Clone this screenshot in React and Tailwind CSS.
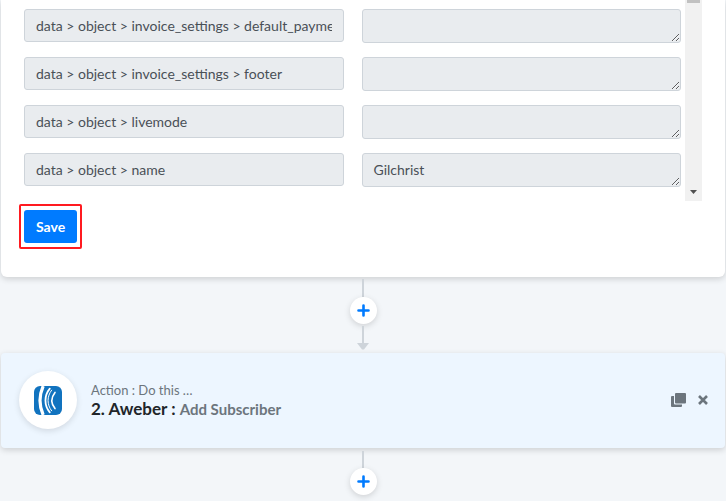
import React from 'react';

const fields = [
    { id: 'default_payment', label: 'data > object > invoice_settings > default_payment_method', value: '' },
    { id: 'footer', label: 'data > object > invoice_settings > footer', value: '' },
    { id: 'livemode', label: 'data > object > livemode', value: '' },
    { id: 'name', label: 'data > object > name', value: 'Gilchrist' },
];

function AddStep() {
    return (
        <button type="button" aria-label="Add step" className="w-[27px] h-[27px] rounded-full bg-white shadow-[0_2px_6px_rgba(0,0,0,0.15)] flex items-center justify-center text-[#007bff]">
            <svg viewBox="0 0 13 13" className="w-[13px] h-[13px]" fill="none" stroke="currentColor" strokeWidth="2.6" strokeLinecap="round">
                <path d="M6.5 1.5v10M1.5 6.5h10" />
            </svg>
        </button>
    );
}

function AweberLogo() {
    return (
        <svg viewBox="0 0 28 29" className="w-7 h-[29px]" fill="none">
            <rect width="28" height="29" rx="6" fill="#1173bf" />
            <g stroke="#fff" strokeLinecap="round">
                <path d="M9.2 0C5.2 9 5.2 20 9.2 29" strokeWidth="3.2" strokeLinecap="butt" />
                <path d="M15.8 2.6C10 9.5 10 19.5 15.8 26.4" strokeWidth="1.8" />
                <path d="M17.6 4.2C12.8 10.5 12.8 18.5 17.6 24.8" strokeWidth="1" />
                <path d="M21 6.4C17 11.5 17 17.5 21 22.6" strokeWidth="1.6" />
            </g>
        </svg>
    );
}

export default function App() {
    return (
        <div className="min-h-screen bg-[#f3f6f9] px-px font-['Lato',sans-serif] text-[#212529]">
            {/* RESPONSE DATA */}
            <section className="bg-white rounded-b-md shadow-[0_2px_6px_rgba(0,0,0,0.16)] px-[23px] pb-7">
                <div className="flex gap-1">
                    <div className="flex-1 min-w-0 pt-[9px] pb-[14px] flex flex-col gap-[14px]">
                        {fields.map(field => (
                            <div key={field.id} className="grid grid-cols-2 gap-[18px] items-start">
                                <input
                                    type="text"
                                    readOnly
                                    aria-label={`${field.id} key`}
                                    value={field.label}
                                    className="min-w-0 h-[33px] px-[11px] rounded-[3px] border border-[#ced4da] bg-[#e9ecef] text-[14px] text-[#495057]"
                                />
                                <textarea
                                    readOnly
                                    rows={1}
                                    aria-label={`${field.id} value`}
                                    defaultValue={field.value}
                                    className="block min-w-0 h-[34px] px-[11px] py-1.5 rounded-[3px] border border-[#ced4da] bg-[#e9ecef] text-[14px] leading-5 text-[#495057] resize-y overflow-hidden"
                                />
                            </div>
                        ))}
                    </div>
                    <div aria-hidden="true" className="w-[17px] bg-[#f1f1f1] flex flex-col items-center justify-between pb-[7px]">
                        <div className="w-[13px] h-[3px] bg-[#c1c1c1]" />
                        <svg viewBox="0 0 7 4" className="w-[7px] h-1" fill="#505050">
                            <path d="M0 0h7L3.5 4z" />
                        </svg>
                    </div>
                </div>
                <div className="mt-[3px] -ml-[5px] w-fit border-2 border-[#ff1a20] rounded-[2px] px-[3px] py-1">
                    <button type="button" className="block h-[33px] px-3 rounded-[3px] bg-[#007bff] text-[14px] font-bold text-white">
                        Save
                    </button>
                </div>
            </section>

            <div className="flex flex-col items-center pt-0.5 pb-[3px]">
                <div className="w-0.5 h-[18px] bg-[#ced4da]" />
                <AddStep />
                <div className="w-0.5 h-[17px] mt-0.5 bg-[#ced4da]" />
                <svg viewBox="0 0 12 7" className="w-3 h-[7px]" fill="#ced4da">
                    <path d="M0 0h12L7 6.5H5z" />
                </svg>
            </div>

            {/* ACTION STEP */}
            <section className="bg-[#edf6ff] rounded-[4px] shadow-[0_2px_6px_rgba(0,0,0,0.16)] pt-[18px] pb-[19px] pl-[18px] pr-[17px] flex items-center">
                <div className="w-[58px] h-[58px] shrink-0 rounded-full bg-white shadow-[0_2px_6px_rgba(0,0,0,0.12)] flex items-center justify-center">
                    <AweberLogo />
                </div>
                <div className="ml-3.5 flex-1 min-w-0">
                    <p className="text-[13px] leading-[18px] text-[#6c757d]">Action : Do this …</p>
                    <h2 className="text-[17px] leading-5 font-bold">
                        2. Aweber : <span className="text-[15px] text-[#6c757d]">Add Subscriber</span>
                    </h2>
                </div>
                <div className="flex items-center gap-3 text-[#6c757d]">
                    <button type="button" aria-label="Duplicate">
                        <svg viewBox="0 0 15 14" className="w-[15px] h-3.5" fill="currentColor">
                            <rect x="4" width="11" height="10.5" rx="1" />
                            <path d="M3 3H1a1 1 0 0 0-1 1v9a1 1 0 0 0 1 1h9a1 1 0 0 0 1-1v-1.5H4a1 1 0 0 1-1-1z" />
                        </svg>
                    </button>
                    <button type="button" aria-label="Remove">
                        <svg viewBox="0 0 10 10" className="w-2.5 h-2.5" fill="none" stroke="currentColor" strokeWidth="2.6">
                            <path d="M1 1l8 8M9 1L1 9" />
                        </svg>
                    </button>
                </div>
            </section>

            <div className="flex flex-col items-center pt-[3px]">
                <div className="w-0.5 h-[17px] bg-[#ced4da]" />
                <AddStep />
            </div>
        </div>
    );
}
